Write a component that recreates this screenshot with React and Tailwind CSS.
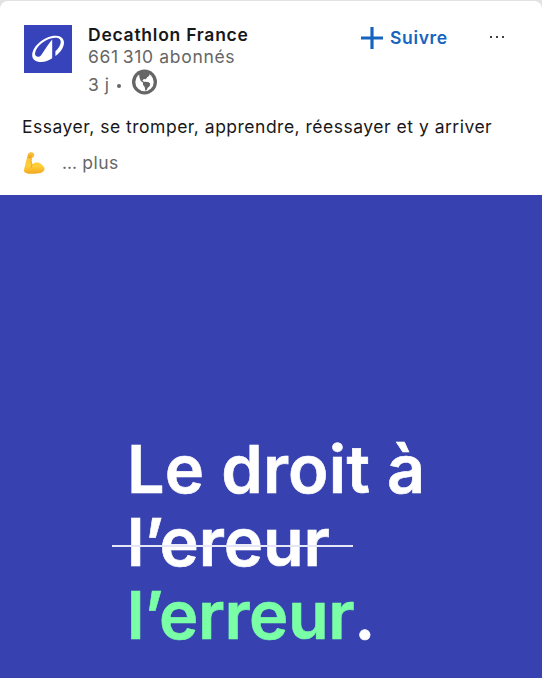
const GlobeIcon = () => (
  <svg viewBox="0 0 26 26" className="h-[26px] w-[26px]" aria-hidden="true">
    <circle cx="13.500" cy="13" r="12.5" fill="#666666" />
    <circle cx="13.500" cy="13" r="9.2" fill="#fff" />
    <path
      d="M8.100 5.500 9.500 3.300H18l.3 3.500-1.800 1.200-1.700 2.300-2-.4-1.400 1.800 1.500 1 4.300.4 2 1.500-.4 2.400-2 1.700-1.200 2.500-1.300.5-.6-3.600-1.800-2.300.2-2-2.300-1.700-1.200-3.200z"
      fill="#666666"
    />
  </svg>
);

const BrandMark = () => (
  <svg viewBox="0 0 48 48" className="mt-px size-12 shrink-0 bg-[#3643ba]" aria-hidden="true">
    <path
      fill="#fff"
      fillRule="evenodd"
      d="M32.200 10.800C21.800 10.200 8.200 20.800 8.200 30.200c0 4.500 3.800 6.900 8.900 6.800 4-.1 7.700-1.500 11.100-3.700V14.500C24.200 19 21.600 23.500 17.800 29.200c-1.400 2-2.700 2.700-4 2.500-2.100-.3-3-1.600-2.700-3.700 1.100-6.600 10.700-14.900 20.200-15.200 3.800-.1 5.700 1.700 5.400 4.800-.3 3-2.300 6.200-5.300 8.700v4.800c5.200-3.800 8.500-9 8.600-13.200.1-4.400-3.200-6.900-7.800-7.100z"
    />
  </svg>
);

const FlexedArm = () => (
  <svg viewBox="0 0 24 24" className="ml-px h-6 w-6" aria-hidden="true">
    <defs>
      <linearGradient id="skin" x1="0" y1="0" x2="0" y2="1">
        <stop offset="0" stopColor="#f9b934" />
        <stop offset=".65" stopColor="#ffcf38" />
        <stop offset="1" stopColor="#f2a51f" />
      </linearGradient>
    </defs>
    <path
      d="M5.600 2.200C6.600 1 8.800.9 10 1.700c1.300.9 1.600 2.600.7 4-.8 1.200-2.100 1.300-2.400 2.400-.4 1.600.1 3.700 1 5.400 2.700-2.700 6.600-2.600 9-.2 1.200 1.200 3.200 2.200 3.200 4.800 0 3-4.200 4.600-9.700 4.700-4.800.1-9.800-.3-10.600-2.400C.6 18.500 2.700 12 3.800 7.500c.4-2.200.8-4.100 1.800-5.300z"
      fill="url(#skin)"
    />
    <path
      d="M5.600 4.700c.9.900 2.500.9 3.300-.2M8.300 8.200c-.5 2.200.1 4 1 5.300-.9 1-1.200 1.800-1.100 2.800M5.500 6.500l2.700.3"
      fill="none"
      stroke="#d98c1b"
      strokeWidth=".7"
      strokeLinecap="round"
    />
  </svg>
);

const PostHeader = () => (
  <header className="flex h-[90px] items-start pl-6 pt-6">
    <BrandMark />
    <div className="ml-4 w-[273px] whitespace-nowrap text-[17.5px] text-[#666666]">
      <h1 className="text-[17.5px] font-semibold leading-[22px] tracking-[0.75px] text-[#181818]">
        Decathlon France
      </h1>
      <p className="leading-[22px] tracking-[0.68px]">661&#8201;310 abonnés</p>
      <div className="flex items-center">
        <span className="pt-[3px] leading-[28px] tracking-[0.5px]">3 j</span>
        <span className="ml-[8px] mt-[5px] size-1 rounded-full bg-[#666666]" />
        <span className="-mt-[4px] ml-[10px]">
          <GlobeIcon />
        </span>
      </div>
    </div>
    <button className="mt-[3px] flex h-[22px] items-center gap-[7px] text-[17.5px] font-semibold tracking-[0.65px] text-[#1664c0]">
      <svg viewBox="0 0 22 22" className="size-[22px]" aria-hidden="true">
        <path d="M11 0v22M0 11h22" stroke="currentColor" strokeWidth="3.2" />
      </svg>
      Suivre
    </button>
    <button className="ml-[42px] mt-[12px] flex gap-[4px]" aria-label="Options">
      <span className="size-[2px] bg-[#404040]" />
      <span className="size-[2px] bg-[#404040]" />
      <span className="size-[2px] bg-[#404040]" />
    </button>
  </header>
);

const PostText = () => (
  <div className="h-[105px] whitespace-nowrap pl-[22px] pt-[19px] text-[17.5px] leading-9 tracking-[0.5px] text-[#181818]">
    <p>Essayer, se tromper, apprendre, réessayer et y arriver</p>
    <div className="flex items-center">
      <FlexedArm />
      <span className="ml-[15px] text-[#666666]">
        <span className="tracking-[-0.1px]">...</span> plus
      </span>
    </div>
  </div>
);

const Visual = () => (
  <section className="h-[483px] bg-[#3742b0] pl-[127px] pt-[238px]">
    <div className="whitespace-nowrap text-[66.5px] font-semibold leading-[73px] text-white [-webkit-text-stroke:0.6px]">
      <p className="tracking-[0.2px]">Le droit à</p>
      <p className="relative tracking-[-0.1px]">
        l’ereur
        <span className="absolute left-[-15px] top-[39px] h-[2px] w-[241px] bg-[#e4e5f7]" />
      </p>
      <p>
        <span className="tracking-[-0.4px] text-[#7affa6]">l’erreur</span>.
      </p>
    </div>
  </section>
);

export default function App() {
  return (
    <div className="h-[678px] w-[542px] overflow-hidden bg-[#e2e2e2] pt-px font-['Inter',sans-serif]">
      <article className="-mb-px h-[677px] overflow-hidden rounded-t-[8px] bg-white">
        <div className="-mt-px">
          <PostHeader />
          <PostText />
          <Visual />
        </div>
      </article>
    </div>
  );
}
